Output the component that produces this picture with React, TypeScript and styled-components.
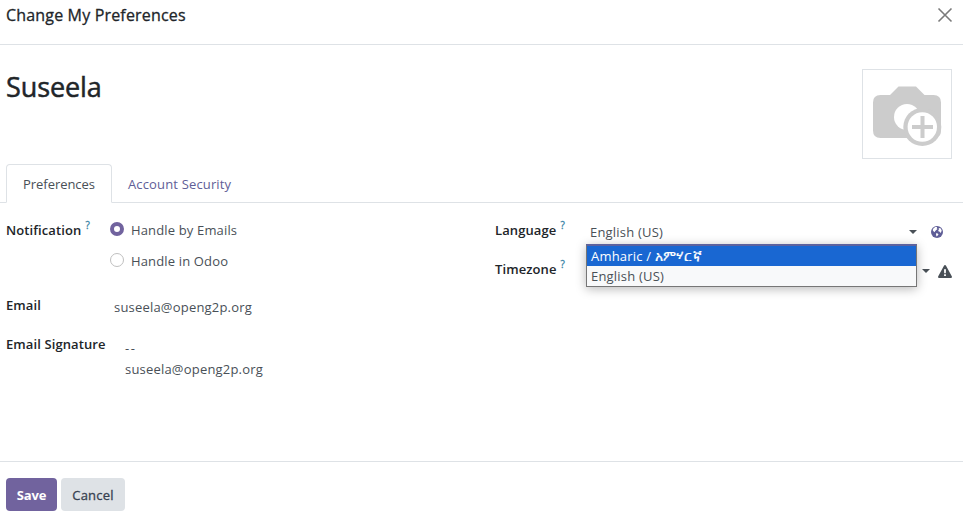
import React from "react";
import styled, { createGlobalStyle } from "styled-components";

const GlobalStyle = createGlobalStyle`
  * { box-sizing: border-box; }
  body { margin: 0; background: #fff; overflow: hidden; }
`;

const Dialog = styled.div`
  display: flex;
  flex-direction: column;
  width: 963px;
  height: 513px;
  background: #fff;
  color: #495057;
  font-family: "Open Sans", "Noto Sans", sans-serif;
  font-size: 13px;
  line-height: 20px;
  letter-spacing: 0.2px;
  white-space: nowrap;
`;

const Header = styled.header`
  display: flex;
  justify-content: space-between;
  height: 45px;
  padding: 4px 10px 0 6px;
  border-bottom: 1px solid #dee2e6;
`;

const Title = styled.h4`
  margin: 0;
  color: #212529;
  font-size: 16px;
  line-height: 22px;
  font-weight: 400;
  letter-spacing: 0.17px;
  -webkit-text-stroke: 0.3px #212529;
`;

const CloseButton = styled.button`
  width: 16px;
  height: 22px;
  padding: 0;
  border: 0;
  background: none;
`;

const Identity = styled.section`
  display: flex;
  justify-content: space-between;
  height: 119px;
  padding: 24px 11px 0 6px;
`;

const Name = styled.h1`
  margin: 0;
  color: #212529;
  font-size: 27px;
  line-height: 36px;
  font-weight: 400;
  letter-spacing: -0.1px;
  -webkit-text-stroke: 0.5px #212529;
`;

const Avatar = styled.div`
  width: 90px;
  height: 90px;
  border: 1px solid #dee2e6;
`;

const Tabs = styled.nav`
  display: flex;
  height: 39px;
  padding-left: 6px;
  border-bottom: 1px solid #dee2e6;
`;

const Tab = styled.a<{ $active?: boolean }>`
  width: ${(p) => (p.$active ? "106px" : "auto")};
  height: 39px;
  padding: 9px 15px 0 ${(p) => (p.$active ? "16px" : "15px")};
  border-width: 1px;
  border-style: solid;
  border-color: ${(p) => (p.$active ? "#dee2e6 #dee2e6 #fff" : "transparent")};
  border-radius: 4px 4px 0 0;
  background: ${(p) => (p.$active ? "#fff" : "transparent")};
  color: ${(p) => (p.$active ? "#495057" : "#5f5e97")};
  letter-spacing: ${(p) => (p.$active ? "-0.04px" : "0.15px")};
`;

const Content = styled.main`
  display: grid;
  grid-template-columns: 489px 1fr;
  height: 258px;
`;

const Column = styled.div<{ $right?: boolean }>`
  display: grid;
  align-content: start;
  grid-template-columns: ${(p) => (p.$right ? "92px 1fr" : "104px 1fr")};
  grid-template-rows: ${(p) => (p.$right ? "39px 39px" : "75px 39px 70px")};
  padding: 17px 0 0 6px;
`;

const Label = styled.label`
  color: #212529;
  font-weight: 600;
  letter-spacing: 0.1px;
`;

const Help = styled.sup`
  margin-left: 4px;
  color: #3581a5;
  font-size: 10px;
  font-weight: 400;
  line-height: 0;
  vertical-align: 6px;
  -webkit-text-stroke: 0.3px #3581a5;
`;

const Radios = styled.div`
  display: flex;
  flex-direction: column;
  gap: 11px;
  letter-spacing: 0.15px;
`;

const RadioOption = styled.div`
  display: flex;
  gap: 7px;
`;

const RadioMark = styled.span<{ $checked?: boolean }>`
  width: 14px;
  height: 14px;
  margin-top: 2px;
  border-radius: 50%;
  border: ${(p) => (p.$checked ? "4px solid #71639e" : "1px solid #bfbfbf")};
`;

const EmailValue = styled.span`
  padding: 2px 0 0 4px;
`;

const Signature = styled.div`
  padding: 4px 0 0 15px;
`;

const SignatureLine = styled.p<{ $dashes?: boolean }>`
  margin: 0;
  line-height: 21px;
  letter-spacing: ${(p) => (p.$dashes ? "1.6px" : "inherit")};
`;

const Field = styled.div`
  position: relative;
  display: flex;
  align-items: center;
  height: 24px;
`;

const SelectBox = styled.div<{ $narrow?: boolean }>`
  display: flex;
  flex: none;
  align-items: center;
  width: ${(p) => (p.$narrow ? "343px" : "330px")};
  height: 22px;
  padding-left: 3px;
`;

const Caret = styled.i`
  margin-left: auto;
  border: 4px solid transparent;
  border-top-color: #495057;
  border-bottom: 0;
`;

const FieldIcon = styled.span<{ $gap: number }>`
  display: flex;
  margin-left: ${(p) => p.$gap}px;
`;

const Menu = styled.div`
  position: absolute;
  z-index: 1;
  top: 24px;
  left: -1px;
  width: 331px;
  height: 43px;
  border: 1px solid #767676;
  border-top: 2px solid #5d629e;
  background: #f8f9fa;
  box-shadow: 0 2px 10px rgba(0, 0, 0, 0.28);
`;

const MenuItem = styled.div<{ $selected?: boolean }>`
  height: 20px;
  padding-left: 4px;
  line-height: 20px;
  background: ${(p) => (p.$selected ? "#1967d2" : "transparent")};
  color: ${(p) => (p.$selected ? "#fff" : "#495057")};
`;

const NativeName = styled.span`
  font-size: 13.5px;
  line-height: 1;
  -webkit-text-stroke: 0.2px #fff;
`;

const Footer = styled.footer`
  display: flex;
  gap: 4px;
  flex: 1;
  padding: 16px 6px 0;
  border-top: 1px solid #dee2e6;
`;

const Button = styled.button<{ $primary?: boolean }>`
  width: ${(p) => (p.$primary ? "51px" : "64px")};
  height: 33px;
  padding: 0;
  border: 0;
  border-radius: 4px;
  font-family: inherit;
  font-size: 13px;
  font-weight: ${(p) => (p.$primary ? 700 : 400)};
  letter-spacing: ${(p) => (p.$primary ? "-0.1px" : "0.2px")};
  -webkit-text-stroke: ${(p) => (p.$primary ? "0" : "0.3px #374151")};
  background: ${(p) => (p.$primary ? "#71639e" : "#dee2e6")};
  color: ${(p) => (p.$primary ? "#fff" : "#374151")};
`;

const CameraIcon = () => (
  <svg width="88" height="88" viewBox="0 0 88 88">
    <path
      d="M17 25h10l8.500-8.500h17.500l8.500 8.500h9q7.500 0 7.500 7.500v28q0 7.500-7.500 7.500H17.500q-7.500 0-7.500-7.500V32.500q0-7.500 7.500-7.500Z"
      fill="#ccc"
    />
    <circle cx="44" cy="47" r="13" fill="#fff" />
    <circle cx="59.3" cy="57" r="19" fill="#ccc" />
    <circle cx="59.3" cy="57" r="14.7" fill="#fff" />
    <path d="M59.5 46v22M49 57h21" stroke="#ccc" strokeWidth="4" />
  </svg>
);

const GlobeIcon = () => (
  <svg width="12" height="12" viewBox="0 0 12 12">
    <circle cx="6" cy="6" r="6" fill="#5f5e97" />
    <path
      d="M2.400 2.500 4.200 1.100 6.200 1 5.700 2.300 6.500 3 5 4.300 4 5.200 3.900 6.300 2.400 5.200 1.700 4ZM7.500 2 9.500 2.300 10.700 4.200 10.200 6 9.600 7 8.700 5.800 7.400 5.200 7.300 4 8.200 3.300ZM5 7.300 6.700 7.500 7.500 8.300 6.500 9.800 5.500 10.500 5.100 9Z"
      fill="#fff"
    />
  </svg>
);

const WarningIcon = () => (
  <svg width="14" height="13" viewBox="0 0 14 13">
    <path d="M7 0 Q7.6 0 7.9.6L13.9 11.5Q14.1 13 13 13H1Q-.1 13 .1 11.5L6.1.6Q6.4 0 7 0Z" fill="#495057" />
    <path d="M6 4.200h2l-.2 4H6.200ZM6.100 9.200h1.800v1.800H6.100Z" fill="#fff" />
  </svg>
);

export default function App() {
  return (
    <Dialog>
      <GlobalStyle />
      <Header>
        <Title>Change My Preferences</Title>
        <CloseButton aria-label="Close">
          <svg width="16" height="22" viewBox="0 0 16 22">
            <path d="m1.500 4.500 13 13m0-13-13 13" stroke="#7a7a7a" strokeWidth="1.6" />
          </svg>
        </CloseButton>
      </Header>
      <Identity>
        <Name>Suseela</Name>
        <Avatar>
          <CameraIcon />
        </Avatar>
      </Identity>
      <Tabs>
        <Tab $active>Preferences</Tab>
        <Tab>Account Security</Tab>
      </Tabs>
      <Content>
        <Column>
          <Label>
            Notification<Help>?</Help>
          </Label>
          <Radios>
            <RadioOption>
              <RadioMark $checked />
              Handle by Emails
            </RadioOption>
            <RadioOption>
              <RadioMark />
              Handle in Odoo
            </RadioOption>
          </Radios>
          <Label>Email</Label>
          <EmailValue>suseela@openg2p.org</EmailValue>
          <Label>Email Signature</Label>
          <Signature>
            <SignatureLine $dashes>--</SignatureLine>
            <SignatureLine>suseela@openg2p.org</SignatureLine>
          </Signature>
        </Column>
        <Column $right>
          <Label>
            Language<Help>?</Help>
          </Label>
          <Field>
            <SelectBox>
              English (US)
              <Caret />
            </SelectBox>
            <FieldIcon $gap={14}>
              <GlobeIcon />
            </FieldIcon>
            <Menu>
              <MenuItem $selected>
                Amharic / <NativeName>አምሃርኛ</NativeName>
              </MenuItem>
              <MenuItem>English (US)</MenuItem>
            </Menu>
          </Field>
          <Label>
            Timezone<Help>?</Help>
          </Label>
          <Field>
            <SelectBox $narrow>
              <Caret />
            </SelectBox>
            <FieldIcon $gap={8}>
              <WarningIcon />
            </FieldIcon>
          </Field>
        </Column>
      </Content>
      <Footer>
        <Button $primary>Save</Button>
        <Button>Cancel</Button>
      </Footer>
    </Dialog>
  );
}
